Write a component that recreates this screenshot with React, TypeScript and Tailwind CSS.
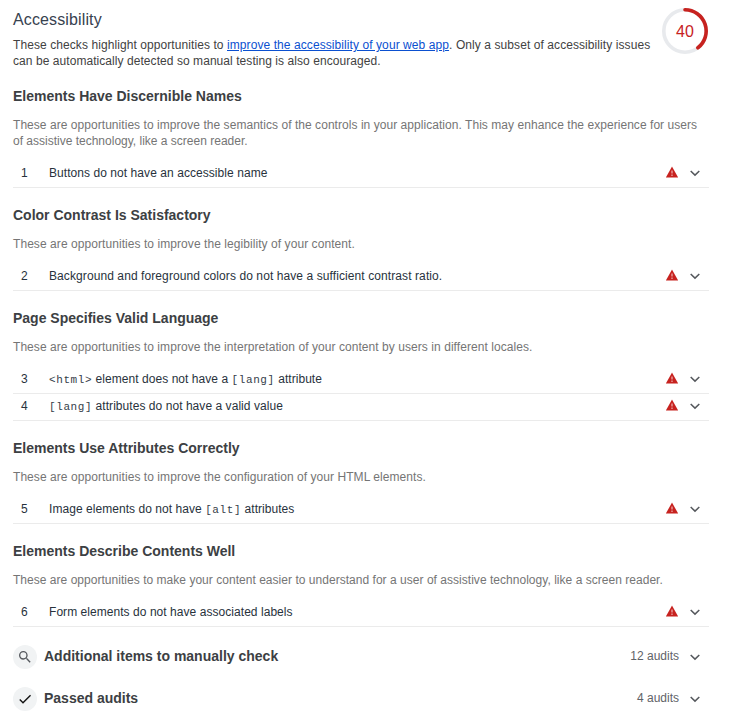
import type { ReactNode } from 'react';

type Line = { text: string; spacing: string };
type Row = { n: number; text: ReactNode; spacing: string };
type Group = { title: string; lines: Line[]; rows: Row[] };

const Code = ({ children }: { children: string }) => (
  <code className="font-['Liberation_Mono',monospace] text-[11px] leading-none tracking-[0.6px] text-[#36404a]">{children}</code>
);

const groups: Group[] = [
  {
    title: 'Elements Have Discernible Names',
    lines: [
      { text: 'These are opportunities to improve the semantics of the controls in your application. This may enhance the experience for users', spacing: 'tracking-[0.047px]' },
      { text: 'of assistive technology, like a screen reader.', spacing: 'tracking-normal' },
    ],
    rows: [{ n: 1, text: 'Buttons do not have an accessible name', spacing: 'tracking-[0.06px]' }],
  },
  {
    title: 'Color Contrast Is Satisfactory',
    lines: [{ text: 'These are opportunities to improve the legibility of your content.', spacing: 'tracking-[0.065px]' }],
    rows: [{ n: 2, text: 'Background and foreground colors do not have a sufficient contrast ratio.', spacing: 'tracking-[0.09px]' }],
  },
  {
    title: 'Page Specifies Valid Language',
    lines: [{ text: 'These are opportunities to improve the interpretation of your content by users in different locales.', spacing: 'tracking-[0.06px]' }],
    rows: [
      { n: 3, text: <><Code>{'<html>'}</Code> element does not have a <Code>[lang]</Code> attribute</>, spacing: 'tracking-[0.05px]' },
      { n: 4, text: <><Code>[lang]</Code> attributes do not have a valid value</>, spacing: 'tracking-[0.05px]' },
    ],
  },
  {
    title: 'Elements Use Attributes Correctly',
    lines: [{ text: 'These are opportunities to improve the configuration of your HTML elements.', spacing: 'tracking-[0.06px]' }],
    rows: [{ n: 5, text: <>Image elements do not have <Code>[alt]</Code> attributes</>, spacing: 'tracking-[0.05px]' }],
  },
  {
    title: 'Elements Describe Contents Well',
    lines: [{ text: 'These are opportunities to make your content easier to understand for a user of assistive technology, like a screen reader.', spacing: 'tracking-[0.03px]' }],
    rows: [{ n: 6, text: 'Form elements do not have associated labels', spacing: 'tracking-[0.05px]' }],
  },
];

const Chevron = () => (
  <svg className="h-3 w-3 shrink-0" viewBox="0 0 12 12" fill="none" stroke="#55585d" strokeWidth="1.5">
    <path d="M1.7 4 6 8.1 10.3 4" />
  </svg>
);

const Warning = () => (
  <svg className="mb-0.5 h-3 w-3 shrink-0" viewBox="0 0 12 12">
    <path d="M6 0.6 12.2 11.5H-0.2Z" fill="#c7221f" />
    <path d="M6 4.6V7.6M6 8.5V9.9" stroke="#eba9a8" strokeWidth="1.3" />
  </svg>
);

const Gauge = () => (
  <div className="relative mt-2 mr-px h-[46px] w-[46px]">
    <svg className="h-full w-full" viewBox="0 0 46 46" fill="none" strokeWidth="3.6">
      <circle cx="23" cy="23" r="21.2" stroke="#e8eaed" />
      <path d="M23 1.8A21.2 21.2 0 0 1 35.9 39.8" stroke="#c7221f" strokeLinecap="round" />
    </svg>
    <span className="absolute inset-0 flex items-center justify-center pt-px text-base leading-none text-[#c7221f]">40</span>
  </div>
);

const Clump = ({ title, count, children }: { title: string; count: string; children: ReactNode }) => (
  <div className="flex h-[42px] items-center pr-2">
    <span className="flex h-6 w-6 items-center justify-center rounded-full bg-[#f1f3f4]">{children}</span>
    <h3 className="mb-0.5 ml-[7px] flex-1 text-[14px] leading-4 font-bold text-[#3c4043]">{title}</h3>
    <span className="mr-[10px] mb-0.5 text-[12px] leading-4 text-[#5f6368]">{count}</span>
    <Chevron />
  </div>
);

export default function App() {
  return (
    <main className="h-[716px] w-[731px] overflow-hidden bg-white pr-[22px] pl-[13px] font-['Liberation_Sans',Arial,sans-serif] text-[12px] leading-4 whitespace-nowrap">
      <header className="flex h-[88px] justify-between">
        <div className="pt-2">
          <h1 className="text-base leading-6 tracking-[0.13px] text-[#37424f]">Accessibility</h1>
          <p className="mt-[5px] tracking-[0.08px] text-[#424242]">
            These checks highlight opportunities to <a href="#" className="text-[#0b50d0] underline">improve the accessibility of your web app</a>. Only a subset of accessibility issues
          </p>
          <p className="tracking-[0.06px] text-[#424242]">
            can be automatically detected so manual testing is also encouraged.
          </p>
        </div>
        <Gauge />
      </header>
      {groups.map((g) => (
        <section key={g.title} className="mb-[19px]">
          <h2 className="text-[14px] leading-4 font-bold text-[#3c4043]">{g.title}</h2>
          <div className="mt-[13px] mb-3 text-[#757575]">
            {g.lines.map((l) => <p key={l.text} className={l.spacing}>{l.text}</p>)}
          </div>
          {g.rows.map((r) => (
            <div key={r.n} className="flex h-[27px] items-center border-b border-[#ebebeb] pr-2 pb-0.5 pl-2 text-[#28323c]">
              <span className="w-7">{r.n}</span>
              <span className={`h-4 flex-1 ${r.spacing}`}>{r.text}</span>
              <span className="flex items-center gap-[11px]"><Warning /><Chevron /></span>
            </div>
          ))}
        </section>
      ))}
      <div className="-mt-[10px]">
        <Clump title="Additional items to manually check" count="12 audits">
          <svg className="h-4 w-4" viewBox="0 0 24 24" fill="#55585d"><path d="M15.5 14h-.79l-.28-.27A6.47 6.47 0 0 0 16 9.5 6.5 6.5 0 1 0 9.5 16c1.61 0 3.09-.59 4.23-1.57l.27.28v.79l5 4.99L20.49 19l-4.99-5zm-6 0A4.5 4.5 0 1 1 14 9.5 4.5 4.5 0 0 1 9.5 14z" /></svg>
        </Clump>
        <Clump title="Passed audits" count="4 audits">
          <svg className="h-4 w-4" viewBox="0 0 24 24" fill="#111"><path d="M9 16.17 4.83 12l-1.42 1.41L9 19 21 7l-1.41-1.41z" /></svg>
        </Clump>
      </div>
    </main>
  );
}
